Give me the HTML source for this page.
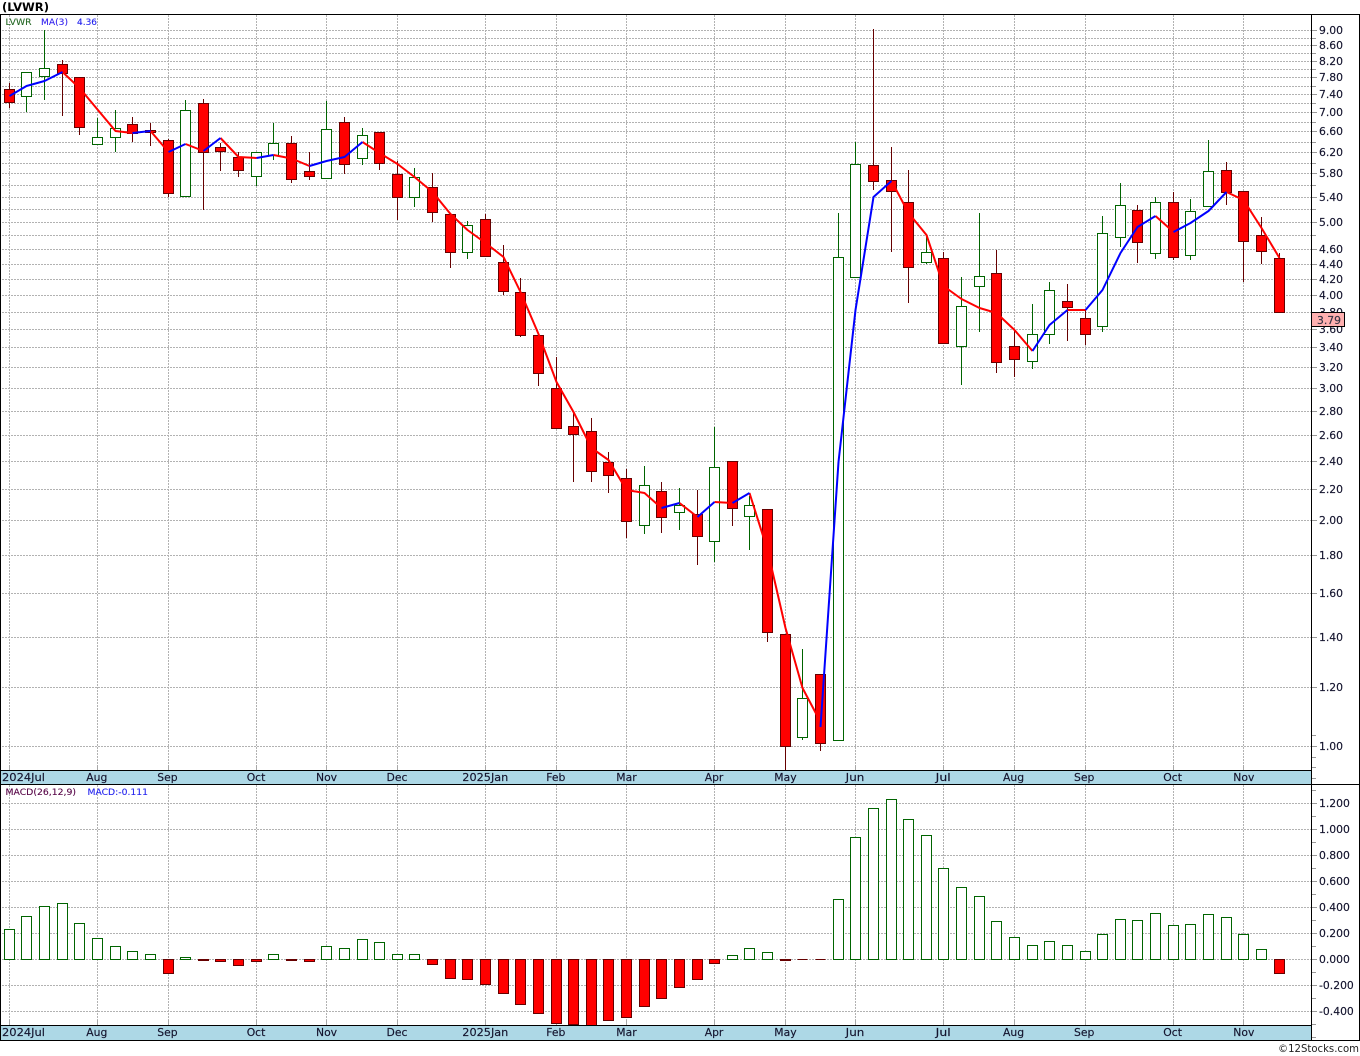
<!DOCTYPE html>
<html>
<head>
<meta charset="utf-8">
<title>LVWR</title>
<style>
html,body{margin:0;padding:0;background:#fff;width:1360px;height:1056px;overflow:hidden}
svg{display:block;position:absolute;left:0;top:0}
text{font-family:"DejaVu Sans","Liberation Sans",sans-serif;font-size:10.8px;fill:#14142e;stroke:#14142e;stroke-width:.15px}
.s{font-size:9px;stroke-width:.1px}
</style>
</head>
<body>
<svg width="1360" height="1056" viewBox="0 0 1360 1056" xmlns="http://www.w3.org/2000/svg">
<rect width="1360" height="1056" fill="#fff"/>
<!-- date strips -->
<rect x="0" y="770" width="1311" height="14" fill="#add8e6"/>
<rect x="0" y="1025" width="1311" height="15" fill="#add8e6"/>
<!-- horizontal grid -->
<path fill="none" stroke="#b2b2b2" stroke-dasharray="2 1" shape-rendering="crispEdges" d="M2 30.5H1311M2 38.5H1311M2 45.5H1311M2 53.5H1311M2 61.5H1311M2 69.5H1311M2 77.5H1311M2 86.5H1311M2 94.5H1311M2 103.5H1311M2 112.5H1311M2 122.5H1311M2 131.5H1311M2 142.5H1311M2 152.5H1311M2 163.5H1311M2 173.5H1311M2 185.5H1311M2 197.5H1311M2 209.5H1311M2 222.5H1311M2 235.5H1311M2 249.5H1311M2 264.5H1311M2 279.5H1311M2 295.5H1311M2 312.5H1311M2 329.5H1311M2 347.5H1311M2 367.5H1311M2 388.5H1311M2 411.5H1311M2 435.5H1311M2 461.5H1311M2 489.5H1311M2 520.5H1311M2 555.5H1311M2 593.5H1311M2 637.5H1311M2 687.5H1311M2 746.5H1311M2 803.5H1311M2 829.5H1311M2 855.5H1311M2 881.5H1311M2 907.5H1311M2 933.5H1311M2 959.5H1311M2 985.5H1311M2 1011.5H1311"/>
<!-- vertical grid -->
<path fill="none" stroke="#b2b2b2" stroke-dasharray="2 1" shape-rendering="crispEdges" d="M9.5 15V770M97.5 15V770M168.5 15V770M256.5 15V770M326.5 15V770M397.5 15V770M485.5 15V770M556.5 15V770M626.5 15V770M714.5 15V770M785.5 15V770M855.5 15V770M943.5 15V770M1014.5 15V770M1085.5 15V770M1173.5 15V770M1243.5 15V770M9.5 785V1025M97.5 785V1025M168.5 785V1025M256.5 785V1025M326.5 785V1025M397.5 785V1025M485.5 785V1025M556.5 785V1025M626.5 785V1025M714.5 785V1025M785.5 785V1025M855.5 785V1025M943.5 785V1025M1014.5 785V1025M1085.5 785V1025M1173.5 785V1025M1243.5 785V1025"/>
<path fill="none" stroke="#a8a8a8" shape-rendering="crispEdges" d="M9.5 765V770M97.5 765V770M168.5 765V770M256.5 765V770M326.5 765V770M397.5 765V770M485.5 765V770M556.5 765V770M626.5 765V770M714.5 765V770M785.5 765V770M855.5 765V770M943.5 765V770M1014.5 765V770M1085.5 765V770M1173.5 765V770M1243.5 765V770M9.5 1020V1025M97.5 1020V1025M168.5 1020V1025M256.5 1020V1025M326.5 1020V1025M397.5 1020V1025M485.5 1020V1025M556.5 1020V1025M626.5 1020V1025M714.5 1020V1025M785.5 1020V1025M855.5 1020V1025M943.5 1020V1025M1014.5 1020V1025M1085.5 1020V1025M1173.5 1020V1025M1243.5 1020V1025"/>
<!-- axis ticks -->
<path fill="none" stroke="#999" shape-rendering="crispEdges" d="M1312 30.5H1317M1312 38.5H1316M1312 45.5H1317M1312 53.5H1316M1312 61.5H1317M1312 69.5H1316M1312 77.5H1317M1312 86.5H1316M1312 94.5H1317M1312 103.5H1316M1312 112.5H1317M1312 122.5H1316M1312 131.5H1317M1312 142.5H1316M1312 152.5H1317M1312 163.5H1316M1312 173.5H1317M1312 185.5H1316M1312 197.5H1317M1312 209.5H1316M1312 222.5H1317M1312 235.5H1316M1312 249.5H1317M1312 264.5H1317M1312 279.5H1317M1312 295.5H1317M1312 312.5H1317M1312 329.5H1317M1312 347.5H1317M1312 367.5H1317M1312 388.5H1317M1312 411.5H1317M1312 435.5H1317M1312 461.5H1317M1312 489.5H1317M1312 520.5H1317M1312 555.5H1317M1312 593.5H1317M1312 637.5H1317M1312 687.5H1317M1312 735.5H1316M1312 746.5H1317M1312 757.5H1316M1312 767.5H1316M1312 778.5H1316M1312 790.5H1316M1312 803.5H1317M1312 816.5H1316M1312 829.5H1317M1312 842.5H1316M1312 855.5H1317M1312 868.5H1316M1312 881.5H1317M1312 894.5H1316M1312 907.5H1317M1312 920.5H1316M1312 933.5H1317M1312 946.5H1316M1312 959.5H1317M1312 972.5H1316M1312 985.5H1317M1312 998.5H1316M1312 1011.5H1317M1312 1024.5H1316M1312 1037.5H1316"/>
<!-- wicks -->
<path fill="none" stroke="#660000" shape-rendering="crispEdges" d="M9.5 83V108M62.5 60V116M79.5 77V135M132.5 117V142M150.5 123V146M168.5 139V197M203.5 99V210M220.5 143V171M238.5 152V177M291.5 136V183M309.5 152V180M344.5 117V174M379.5 132V170M397.5 161V220M432.5 173V222M450.5 214V268M485.5 214V257M503.5 245V295M520.5 278V337M538.5 335V386M556.5 357V428M573.5 412V482M591.5 418V482M608.5 452V493M626.5 469V538M661.5 482V533M697.5 490V565M732.5 461V526M767.5 509V642M785.5 634V770M820.5 674V751M873.5 29V190M891.5 147V252M908.5 170V303M943.5 252V343M996.5 250V373M1014.5 330V377M1067.5 284V341M1085.5 310V345M1137.5 205V263M1173.5 192V260M1226.5 162V205M1243.5 191V282M1261.5 217V264M1279.5 253V259"/>
<path fill="none" stroke="#006400" shape-rendering="crispEdges" d="M26.5 96V112M44.5 30V100M97.5 118V137M115.5 110V152M185.5 100V110M256.5 152V186M273.5 123V160M326.5 101V178M362.5 128V165M414.5 168V207M467.5 221V259M644.5 466V534M679.5 488V530M714.5 427V562M749.5 496V550M802.5 649V740M838.5 213V257M855.5 142V164M926.5 234V264M961.5 277V385M979.5 213V332M1032.5 304V369M1049.5 282V344M1102.5 216V332M1120.5 183V247M1155.5 197V259M1190.5 199V260M1208.5 140V207"/>
<!-- green bodies -->
<path fill="#fff" stroke="#006400" shape-rendering="crispEdges" d="M21.5 72.5h10v24h-10zM39.5 68.5h10v8h-10zM92.5 137.5h10v7h-10zM110.5 128.5h10v9h-10zM180.5 110.5h10v86h-10zM251.5 152.5h10v24h-10zM268.5 143.5h10v12h-10zM321.5 129.5h10v49h-10zM357.5 135.5h10v23h-10zM409.5 177.5h10v20h-10zM462.5 225.5h10v27h-10zM639.5 485.5h10v40h-10zM674.5 505.5h10v7h-10zM709.5 467.5h10v74h-10zM744.5 505.5h10v11h-10zM797.5 698.5h10v39h-10zM833.5 257.5h10v483h-10zM850.5 164.5h10v113h-10zM921.5 252.5h10v10h-10zM956.5 306.5h10v40h-10zM974.5 276.5h10v10h-10zM1027.5 334.5h10v27h-10zM1044.5 290.5h10v44h-10zM1097.5 233.5h10v93h-10zM1115.5 205.5h10v32h-10zM1150.5 202.5h10v51h-10zM1185.5 211.5h10v44h-10zM1203.5 171.5h10v35h-10z"/>
<!-- red bodies -->
<path fill="#f00" stroke="#660000" shape-rendering="crispEdges" d="M4.5 89.5h10v13h-10zM57.5 64.5h10v9h-10zM74.5 77.5h10v50h-10zM127.5 124.5h10v9h-10zM145.5 130.5h10v2h-10zM163.5 140.5h10v53h-10zM198.5 103.5h10v49h-10zM215.5 147.5h10v4h-10zM233.5 157.5h10v13h-10zM286.5 143.5h10v36h-10zM304.5 171.5h10v5h-10zM339.5 122.5h10v42h-10zM374.5 132.5h10v31h-10zM392.5 174.5h10v23h-10zM427.5 187.5h10v25h-10zM445.5 214.5h10v38h-10zM480.5 219.5h10v37h-10zM498.5 262.5h10v29h-10zM515.5 292.5h10v43h-10zM533.5 335.5h10v38h-10zM551.5 388.5h10v40h-10zM568.5 426.5h10v8h-10zM586.5 431.5h10v40h-10zM603.5 462.5h10v13h-10zM621.5 478.5h10v43h-10zM656.5 491.5h10v26h-10zM692.5 514.5h10v22h-10zM727.5 461.5h10v47h-10zM762.5 509.5h10v123h-10zM780.5 634.5h10v112h-10zM815.5 674.5h10v69h-10zM868.5 165.5h10v16h-10zM886.5 180.5h10v11h-10zM903.5 202.5h10v65h-10zM938.5 258.5h10v85h-10zM991.5 273.5h10v89h-10zM1009.5 346.5h10v13h-10zM1062.5 301.5h10v6h-10zM1080.5 318.5h10v16h-10zM1132.5 210.5h10v32h-10zM1168.5 202.5h10v55h-10zM1221.5 170.5h10v22h-10zM1238.5 191.5h10v50h-10zM1256.5 235.5h10v16h-10zM1274.5 258.5h10v54h-10z"/>
<!-- moving average -->
<path fill="none" stroke="#f00" stroke-width="2" stroke-linejoin="round" d="M62.5 72L79.5 88L115.5 131L132.5 133M150.5 131L168.5 152M185.5 144L203.5 151M220.5 138L238.5 157L256.5 158M273.5 155L291.5 158.5L309.5 166M362.5 142L379.5 153L397.5 164L414.5 177L432.5 192L450.5 214L467.5 230L485.5 243L503.5 257L520.5 292L538.5 334L556.5 382L573.5 412L591.5 448L608.5 460L626.5 490L644.5 493L661.5 508M679.5 503L697.5 517M714.5 502L732.5 503M749.5 493L767.5 550L785.5 628L802.5 688L820.5 722M891.5 181L908.5 213L926.5 235L943.5 286L961.5 299L979.5 308L996.5 313L1014.5 330L1032.5 351M1067.5 310L1085.5 310M1155.5 216L1173.5 232M1226.5 192L1243.5 200L1261.5 228L1279.5 258"/>
<path fill="none" stroke="#00f" stroke-width="2" stroke-linejoin="round" d="M9.5 96L26.5 86L44.5 81L62.5 72M132.5 133L150.5 131M168.5 152L185.5 144M203.5 151L220.5 138M256.5 158L273.5 155M309.5 166L326.5 161L344.5 157L362.5 142M661.5 508L679.5 503M697.5 517L714.5 502M732.5 503L749.5 493M820.5 727L838.5 462L855.5 310L873.5 197L891.5 181M1032.5 351L1049.5 325L1067.5 310M1085.5 310L1102.5 290L1120.5 253L1137.5 227L1155.5 216M1173.5 232L1190.5 223L1208.5 211L1226.5 192"/>
<!-- MACD bars -->
<path fill="#fff" stroke="#006400" shape-rendering="crispEdges" d="M4.5 929.5h10v30h-10zM21.5 916.5h10v43h-10zM39.5 906.5h10v53h-10zM57.5 903.5h10v56h-10zM74.5 923.5h10v36h-10zM92.5 938.5h10v21h-10zM110.5 946.5h10v13h-10zM127.5 951.5h10v8h-10zM145.5 954.5h10v5h-10zM180.5 957.5h10v2h-10zM268.5 954.5h10v5h-10zM321.5 946.5h10v13h-10zM339.5 948.5h10v11h-10zM357.5 939.5h10v20h-10zM374.5 942.5h10v17h-10zM392.5 954.5h10v5h-10zM409.5 954.5h10v5h-10zM727.5 955.5h10v4h-10zM744.5 948.5h10v11h-10zM762.5 952.5h10v7h-10zM833.5 899.5h10v60h-10zM850.5 837.5h10v122h-10zM868.5 808.5h10v151h-10zM886.5 799.5h10v160h-10zM903.5 819.5h10v140h-10zM921.5 835.5h10v124h-10zM938.5 868.5h10v91h-10zM956.5 887.5h10v72h-10zM974.5 896.5h10v63h-10zM991.5 921.5h10v38h-10zM1009.5 937.5h10v22h-10zM1027.5 945.5h10v14h-10zM1044.5 941.5h10v18h-10zM1062.5 945.5h10v14h-10zM1080.5 951.5h10v8h-10zM1097.5 934.5h10v25h-10zM1115.5 919.5h10v40h-10zM1132.5 920.5h10v39h-10zM1150.5 913.5h10v46h-10zM1168.5 925.5h10v34h-10zM1185.5 924.5h10v35h-10zM1203.5 914.5h10v45h-10zM1221.5 917.5h10v42h-10zM1238.5 934.5h10v25h-10zM1256.5 949.5h10v10h-10z"/>
<path fill="#f00" stroke="#660000" shape-rendering="crispEdges" d="M163.5 959.5h10v14h-10zM198.5 959.5h10v1h-10zM215.5 959.5h10v2h-10zM233.5 959.5h10v6h-10zM251.5 959.5h10v2h-10zM286.5 959.5h10v1h-10zM304.5 959.5h10v2h-10zM427.5 959.5h10v5h-10zM445.5 959.5h10v19h-10zM462.5 959.5h10v20h-10zM480.5 959.5h10v25h-10zM498.5 959.5h10v34h-10zM515.5 959.5h10v45h-10zM533.5 959.5h10v54h-10zM551.5 959.5h10v64h-10zM568.5 959.5h10v65h-10zM586.5 959.5h10v66h-10zM603.5 959.5h10v61h-10zM621.5 959.5h10v58h-10zM639.5 959.5h10v47h-10zM656.5 959.5h10v39h-10zM674.5 959.5h10v28h-10zM692.5 959.5h10v20h-10zM709.5 959.5h10v4h-10zM780.5 959.5h10v1h-10zM1274.5 959.5h10v14h-10z"/>
<path fill="none" stroke="#660000" shape-rendering="crispEdges" d="M797.5 959.5h10M815.5 959.5h10"/>
<!-- frame -->
<path fill="none" stroke="#000" shape-rendering="crispEdges" d="M0 14.5H1360M0 770.5H1311M0 784.5H1360M0 1025.5H1311M0 1040.5H1360M0.5 14V1040M1311.5 14V1040M1359.5 14V1040"/>
<!-- title + legend -->
<text x="2" y="11" textLength="47" lengthAdjust="spacingAndGlyphs" style="font-size:11.5px;font-weight:bold;fill:#000;stroke:none">(LVWR)</text>
<text x="5.5" class="s" y="25" textLength="26" lengthAdjust="spacingAndGlyphs" style="fill:#226622;stroke:#226622">LVWR</text>
<text x="41" class="s" y="25" textLength="27" lengthAdjust="spacingAndGlyphs" style="fill:#3322ee;stroke:#3322ee">MA(3)</text>
<text x="77" class="s" y="25" textLength="20" lengthAdjust="spacingAndGlyphs" style="fill:#2222ee;stroke:#2222ee">4.36</text>
<text x="5.5" class="s" y="795" textLength="70.5" lengthAdjust="spacingAndGlyphs" style="fill:#550044;stroke:#550044">MACD(26,12,9)</text>
<text x="87.5" class="s" y="795" textLength="60.5" lengthAdjust="spacingAndGlyphs" style="fill:#2222ee;stroke:#2222ee">MACD:-0.111</text>
<!-- price labels -->
<g>
<text x="1319" y="34">9.00</text><text x="1319" y="49">8.60</text><text x="1319" y="65">8.20</text><text x="1319" y="81">7.80</text><text x="1319" y="98">7.40</text><text x="1319" y="116">7.00</text><text x="1319" y="135">6.60</text><text x="1319" y="156">6.20</text><text x="1319" y="177">5.80</text><text x="1319" y="201">5.40</text><text x="1319" y="226">5.00</text><text x="1319" y="253">4.60</text><text x="1319" y="268">4.40</text><text x="1319" y="283">4.20</text><text x="1319" y="299">4.00</text><text x="1319" y="316">3.80</text><text x="1319" y="333">3.60</text><text x="1319" y="351">3.40</text><text x="1319" y="371">3.20</text><text x="1319" y="392">3.00</text><text x="1319" y="415">2.80</text><text x="1319" y="439">2.60</text><text x="1319" y="465">2.40</text><text x="1319" y="493">2.20</text><text x="1319" y="524">2.00</text><text x="1319" y="559">1.80</text><text x="1319" y="597">1.60</text><text x="1319" y="641">1.40</text><text x="1319" y="691">1.20</text><text x="1319" y="750">1.00</text>
</g>
<rect x="1311.5" y="312.5" width="33" height="14" fill="#ffb0b0" stroke="#000" shape-rendering="crispEdges"/>
<text x="1317" y="324" style="fill:#334;stroke:#334">3.79</text>
<!-- MACD labels -->
<g>
<text x="1319" y="807">1.200</text><text x="1319" y="833">1.000</text><text x="1319" y="859">0.800</text><text x="1319" y="885">0.600</text><text x="1319" y="911">0.400</text><text x="1319" y="937">0.200</text><text x="1319" y="963">0.000</text><text x="1319" y="989">-0.200</text><text x="1319" y="1015">-0.400</text>
</g>
<!-- date labels -->
<g>
<text x="2" y="781" textLength="43" lengthAdjust="spacingAndGlyphs">2024Jul</text><text x="86.3" y="781">Aug</text><text x="157.3" y="781">Sep</text><text x="246.7" y="781">Oct</text><text x="316" y="781">Nov</text><text x="386.5" y="781">Dec</text><text x="462.3" y="781" textLength="46" lengthAdjust="spacingAndGlyphs">2025Jan</text><text x="546.3" y="781">Feb</text><text x="616.3" y="781">Mar</text><text x="704.7" y="781">Apr</text><text x="774.3" y="781">May</text><text x="845.7" y="781" textLength="18.7" lengthAdjust="spacingAndGlyphs">Jun</text><text x="935.7" y="781" textLength="15" lengthAdjust="spacingAndGlyphs">Jul</text><text x="1003" y="781">Aug</text><text x="1074" y="781">Sep</text><text x="1163.3" y="781">Oct</text><text x="1233.3" y="781">Nov</text>
<text x="2" y="1036" textLength="43" lengthAdjust="spacingAndGlyphs">2024Jul</text><text x="86.3" y="1036">Aug</text><text x="157.3" y="1036">Sep</text><text x="246.7" y="1036">Oct</text><text x="316" y="1036">Nov</text><text x="386.5" y="1036">Dec</text><text x="462.3" y="1036" textLength="46" lengthAdjust="spacingAndGlyphs">2025Jan</text><text x="546.3" y="1036">Feb</text><text x="616.3" y="1036">Mar</text><text x="704.7" y="1036">Apr</text><text x="774.3" y="1036">May</text><text x="845.7" y="1036" textLength="18.7" lengthAdjust="spacingAndGlyphs">Jun</text><text x="935.7" y="1036" textLength="15" lengthAdjust="spacingAndGlyphs">Jul</text><text x="1003" y="1036">Aug</text><text x="1074" y="1036">Sep</text><text x="1163.3" y="1036">Oct</text><text x="1233.3" y="1036">Nov</text>
</g>
<text x="1278" y="1052" textLength="81" lengthAdjust="spacingAndGlyphs" style="font-size:11px;fill:#222;stroke:none">©12Stocks.com</text>
</svg>
</body>
</html>
